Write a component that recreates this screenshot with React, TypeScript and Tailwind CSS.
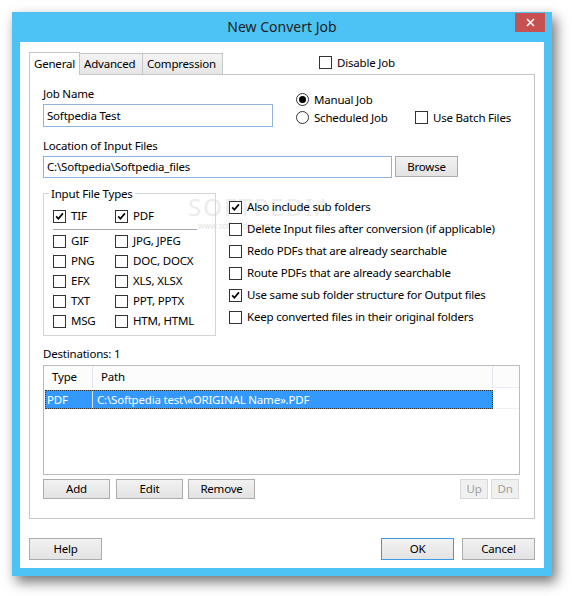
import React from "react";

const FONT = { fontFamily: '"Segoe UI", "Noto Sans", "Open Sans", sans-serif' };

function Check({ checked = false }: { checked?: boolean }) {
  return (
    <span className="w-[13px] h-[13px] border border-[#333333] bg-white flex items-center justify-center shrink-0">
      {checked && (
        <svg width="9" height="9" viewBox="0 0 9 9">
          <path d="M1.2 4.4 L3.4 6.8 L7.9 1.4" stroke="#000" strokeWidth="1.7" fill="none" />
        </svg>
      )}
    </span>
  );
}

function Radio({ checked = false }: { checked?: boolean }) {
  return (
    <span className="w-[13px] h-[13px] rounded-full border border-[#333333] bg-white flex items-center justify-center shrink-0">
      {checked && <span className="w-[7px] h-[7px] rounded-full bg-black" />}
    </span>
  );
}

function CheckRow({ label, checked, h = "h-[20px]" }: { label: string; checked?: boolean; h?: string }) {
  return (
    <div className={`flex items-center gap-[5px] ${h}`}>
      <Check checked={checked} />
      <span className="leading-none whitespace-nowrap">{label}</span>
    </div>
  );
}

function Btn({ label, w, h = "h-[20px]", disabled = false, focus = false }: { label: string; w: string; h?: string; disabled?: boolean; focus?: boolean }) {
  const border = disabled ? "border-[#d9d9d9]" : focus ? "border-[#3c9ae8]" : "border-[#acacac]";
  const text = disabled ? "text-[#a0a0a0]" : "text-black";
  const bg = disabled ? "bg-[#f0f0f0]" : "bg-gradient-to-b from-[#f2f2f2] to-[#e3e3e3]";
  return (
    <div className={`${w} ${h} border ${border} ${bg} ${text} flex items-center justify-center leading-none shrink-0`}>
      {label}
    </div>
  );
}

export default function App() {
  const leftTypes: [string, string][] = [
    ["GIF", "JPG, JPEG"],
    ["PNG", "DOC, DOCX"],
    ["EFX", "XLS, XLSX"],
    ["TXT", "PPT, PPTX"],
    ["MSG", "HTM, HTML"],
  ];
  const options: [string, boolean][] = [
    ["Also include sub folders", true],
    ["Delete Input files after conversion (if applicable)", false],
    ["Redo PDFs that are already searchable", false],
    ["Route PDFs that are already searchable", false],
    ["Use same sub folder structure for Output files", true],
    ["Keep converted files in their original folders", false],
  ];

  return (
    <div className="w-[572px] h-[596px] bg-white overflow-hidden pt-[12px] pl-[12px] text-[11.5px] tracking-[-0.2px] text-black" style={FONT}>
      <div className="w-[540px] h-[564px] bg-[#4cc2f5] flex flex-col shadow-[4px_6px_12px_rgba(0,0,0,0.55)]">
        {/* Title bar */}
        <div className="h-[30px] relative flex items-center justify-center">
          <span className="text-[14px] tracking-normal text-[#222] leading-none">New Convert Job</span>
          <div className="absolute right-[7px] top-[1px] w-[30px] h-[19px] bg-[#c75050] flex items-center justify-center">
            <svg width="9" height="9" viewBox="0 0 9 9">
              <path d="M1 1 L8 8 M8 1 L1 8" stroke="#fff" strokeWidth="1.6" />
            </svg>
          </div>
        </div>
        {/* Client area */}
        <div className="mx-[8px] mb-[8px] flex-1 bg-white flex flex-col">
          {/* Tab row */}
          <div className="mt-[9px] ml-[9px] h-[23px] flex items-end">
            <div className="relative z-10 w-[51px] h-[23px] -mb-px border border-b-0 border-[#c6c6c6] bg-white pl-[4px] pt-[5px] leading-none">
              General
            </div>
            <div className="w-[63px] h-[21px] border border-b-0 border-l-0 border-[#c6c6c6] bg-gradient-to-b from-[#f3f3f3] to-[#e6e6e6] pl-[4px] pt-[4px] leading-none">
              Advanced
            </div>
            <div className="w-[80px] h-[21px] border border-b-0 border-l-0 border-[#c6c6c6] bg-gradient-to-b from-[#f3f3f3] to-[#e6e6e6] pl-[4px] pt-[4px] leading-none">
              Compression
            </div>
            <div className="self-start mt-[5px] ml-[96px] flex items-center gap-[5px] h-[13px]">
              <Check />
              <span className="leading-none">Disable Job</span>
            </div>
          </div>
          {/* Panel */}
          <div className="ml-[9px] w-[506px] h-[445px] border border-[#c6c6c6] bg-white relative isolate pl-[13px] flex flex-col">
            <div className="absolute -z-10 left-[158px] top-[120px] text-[24px] tracking-[2px] text-[#ececec] leading-none">SOFTPEDIA</div>
            <div className="absolute -z-10 left-[168px] top-[147px] text-[8px] tracking-normal text-[#e4e4e4] leading-none">www.softpedia.com</div>

            {/* Row 1 */}
            <div className="flex h-[52px]">
              <div className="w-[230px] pt-[11px] flex flex-col">
                <div className="h-[16px] leading-[16px]">Job Name</div>
                <div className="mt-[2px] h-[23px] border border-[#8fb4e0] flex items-center pl-[3px] leading-none">Softpedia Test</div>
              </div>
              <div className="ml-[23px] pt-[15px] flex flex-col">
                <div className="h-[20px] flex items-center gap-[5px]">
                  <Radio checked />
                  <span className="leading-none">Manual Job</span>
                </div>
                <div className="h-[20px] flex items-center">
                  <Radio />
                  <span className="ml-[5px] w-[101px] leading-none">Scheduled Job</span>
                  <Check />
                  <span className="ml-[5px] leading-none">Use Batch Files</span>
                </div>
              </div>
            </div>

            {/* Location */}
            <div className="mt-[11px] h-[16px] leading-[16px]">Location of Input Files</div>
            <div className="mt-[2px] flex items-start">
              <div className="w-[349px] h-[22px] border border-[#8fb4e0] flex items-center pl-[3px] leading-none">C:\Softpedia\Softpedia_files</div>
              <div className="ml-[3px]">
                <Btn label="Browse" w="w-[63px]" h="h-[21px]" />
              </div>
            </div>

            {/* Group + options */}
            <div className="mt-[15px] flex">
              <div className="relative w-[173px] h-[143px] border border-[#d5d5d5] pl-[9px] pt-[12px]">
                <div className="absolute -top-[8px] left-[5px] bg-white px-[2px] h-[16px] leading-[16px]">Input File Types</div>
                <div className="flex h-[20px]">
                  <div className="w-[62px]"><CheckRow label="TIF" checked /></div>
                  <CheckRow label="PDF" checked />
                </div>
                <div className="mt-[3px] w-[144px] h-px bg-[#a8a8a8]" />
                <div className="mt-[1px] flex flex-col">
                  {leftTypes.map(([a, b]) => (
                    <div key={a} className="flex h-[20px]">
                      <div className="w-[62px]"><CheckRow label={a} /></div>
                      <CheckRow label={b} />
                    </div>
                  ))}
                </div>
              </div>
              <div className="ml-[13px] pt-[3px] flex flex-col">
                {options.map(([l, c]) => (
                  <CheckRow key={l} label={l} checked={c} h="h-[22px]" />
                ))}
              </div>
            </div>

            {/* Destinations */}
            <div className="mt-[10px] h-[16px] leading-[16px]">Destinations: 1</div>
            <div className="mt-[3px] w-[477px] h-[110px] border border-[#bcbcbc] flex flex-col">
              <div className="h-[22px] flex bg-[#fcfcfc]">
                <div className="w-[49px] border-r border-[#e4e8ee] pl-[8px] flex items-center leading-none">Type</div>
                <div className="w-[400px] border-r border-[#e4e8ee] pl-[8px] flex items-center leading-none">Path</div>
                <div className="flex-1 border-b border-[#e8eef6]" />
              </div>
              <div className="mt-[2px] flex">
                <div className="ml-px w-[448px] h-[19px] bg-[#3399ff] border border-dotted border-[#333] flex text-white">
                  <div className="w-[47px] border-r border-[#cfe4fb] pl-px flex items-center leading-none">PDF</div>
                  <div className="pl-[4px] flex items-center leading-none whitespace-nowrap">C:\Softpedia test\«ORIGINAL Name».PDF</div>
                </div>
                <div className="flex-1 h-[19px] border-b border-[#eef2f7]" />
              </div>
            </div>
            <div className="mt-[4px] flex w-[477px]">
              <Btn label="Add" w="w-[67px]" />
              <div className="ml-[6px]"><Btn label="Edit" w="w-[67px]" /></div>
              <div className="ml-[5px]"><Btn label="Remove" w="w-[67px]" /></div>
              <div className="ml-auto flex gap-[3px] mr-px">
                <Btn label="Up" w="w-[28px]" disabled />
                <Btn label="Dn" w="w-[28px]" disabled />
              </div>
            </div>
          </div>
          {/* Bottom buttons */}
          <div className="mt-[19px] px-[9px] flex">
            <Btn label="Help" w="w-[73px]" h="h-[22px]" />
            <div className="ml-auto flex gap-[8px]">
              <Btn label="OK" w="w-[73px]" h="h-[22px]" focus />
              <Btn label="Cancel" w="w-[73px]" h="h-[22px]" />
            </div>
          </div>
        </div>
      </div>
    </div>
  );
}
